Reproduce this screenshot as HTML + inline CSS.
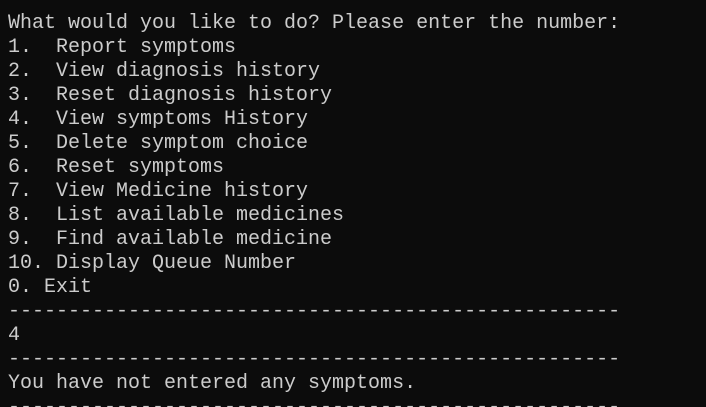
<!DOCTYPE html>
<html><head><style>
html,body{margin:0;padding:0;background:#0c0c0c;width:706px;height:407px;overflow:hidden}
pre{margin:0;padding:12px 0 0 8px;font-family:"Liberation Mono",monospace;font-size:20px;line-height:24px;color:#cccccc}
</style></head><body><pre>What would you like to do? Please enter the number:
1.  Report symptoms
2.  View diagnosis history
3.  Reset diagnosis history
4.  View symptoms History
5.  Delete symptom choice
6.  Reset symptoms
7.  View Medicine history
8.  List available medicines
9.  Find available medicine
10. Display Queue Number
0. Exit
---------------------------------------------------
4
---------------------------------------------------
You have not entered any symptoms.
---------------------------------------------------</pre></body></html>
